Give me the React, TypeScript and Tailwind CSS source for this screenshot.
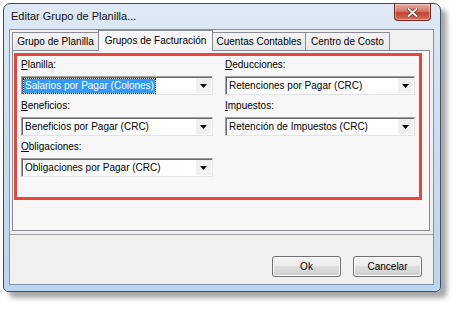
import React from 'react';

const Mn = ({ k, rest }: { k: string; rest: string }) => (
  <span>
    <span className="underline underline-offset-[1px]">{k}</span>
    {rest}
  </span>
);

const Combo = ({ value, selected }: { value: string; selected?: boolean }) => (
  <div className="flex h-[19px] border border-t-[#a0a0a0] border-l-[#a0a0a0] border-r-[#e3e3e3] border-b-[#e3e3e3] bg-white shadow-[inset_1px_1px_0_#696969]">
    <div className="flex flex-1 items-center pl-[2px] pt-[1px] overflow-hidden whitespace-nowrap">
      <span
        className={
          selected
            ? 'bg-[#3399ff] text-white px-[1px] leading-[14px] outline outline-1 outline-dotted outline-[#1a1a1a]'
            : 'px-[1px] leading-[14px] text-black'
        }
      >
        {value}
      </span>
    </div>
    <div className="flex w-[15px] items-center justify-center bg-[#f0f0f0] my-[1px] mr-[1px]">
      <svg width="7" height="4" viewBox="0 0 7 4">
        <path d="M0 0h7L3.5 4z" fill="#000" />
      </svg>
    </div>
  </div>
);

const Field = ({ k, rest, value, selected }: { k: string; rest: string; value: string; selected?: boolean }) => (
  <div className="flex flex-col">
    <div className="h-[13px] leading-[13px] mb-[5px] text-black">
      <Mn k={k} rest={rest} />
    </div>
    <Combo value={value} selected={selected} />
  </div>
);

const tabBase = 'flex items-center justify-center whitespace-nowrap border-[#898c95]';

export default function App() {
  return (
    <div className="w-[459px] h-[314px] bg-white pt-[3px] pl-[3px] font-['Liberation_Sans',Arial,sans-serif] text-[10px] text-black">
      <div className="flex flex-col w-[438px] h-[289px] rounded-t-[7px] rounded-b-[5px] border border-[#3f5068] bg-linear-to-b from-[#dfe9f5] via-[#cadcf0] to-[#bcd5ee] shadow-[6px_6px_5px_rgba(0,0,0,0.35)]">
        {/* title bar */}
        <div className="flex h-[25px] shrink-0 items-start">
          <div className="flex h-full flex-1 items-center pl-[7px] text-[11px] text-[#111]">
            Editar Grupo de Planilla...
          </div>
          <div className="mr-[9px] flex h-[17px] w-[37px] items-center justify-center rounded-b-[4px] border border-t-0 border-[#6e2a22] bg-[linear-gradient(#e9aa9f,#d7786b_45%,#c2402f_55%,#d6715f)] shadow-[inset_0_0_0_1px_rgba(255,255,255,0.35)]">
            <svg width="11" height="9" viewBox="0 0 11 9">
              <path d="M1.5 1l8 7M9.5 1l-8 7" stroke="#5a1a12" strokeWidth="3.2" strokeLinecap="round" />
              <path d="M1.5 1l8 7M9.5 1l-8 7" stroke="#fff" strokeWidth="2" strokeLinecap="round" />
            </svg>
          </div>
        </div>

        {/* client area */}
        <div className="ml-[5px] mr-[6px] flex h-[256px] flex-col border border-[#7f93aa] bg-[#f0f0f0]">
          <div className="ml-[2px] w-[418px]">
            {/* tabs */}
            <div className="flex h-[20px] items-end">
              <div className={`${tabBase} h-[18px] w-[86px] border border-r-0 border-b-0 bg-linear-to-b from-[#f3f3f3] to-[#e8e8e8]`}>
                Grupo de Planilla
              </div>
              <div className={`${tabBase} relative z-10 -mb-px h-[21px] w-[115px] border border-b-0 bg-[#f7f7f7] pb-[2px]`}>
                Grupos de Facturación
              </div>
              <div className={`${tabBase} h-[18px] w-[93px] border border-l-0 border-b-0 bg-linear-to-b from-[#f3f3f3] to-[#e8e8e8]`}>
                Cuentas Contables
              </div>
              <div className={`${tabBase} h-[18px] w-[84px] border border-l-0 border-b-0 bg-linear-to-b from-[#f3f3f3] to-[#e8e8e8]`}>
                Centro de Costo
              </div>
            </div>
            {/* panel */}
            <div className="h-[181px] border border-[#898c95] bg-[#f7f7f7]">
              <div className="ml-px mt-[2px] h-[147px] w-[408px] border-[3px] border-[#e8453c] pl-[4px] pt-[2px]">
                <div className="grid grid-cols-[192px_190px] gap-x-[12px] gap-y-[4px]">
                  <Field k="P" rest="lanilla:" value="Salarios por Pagar (Colones)" selected />
                  <Field k="D" rest="educciones:" value="Retenciones por Pagar (CRC)" />
                  <Field k="B" rest="eneficios:" value="Beneficios por Pagar (CRC)" />
                  <Field k="I" rest="mpuestos:" value="Retención de Impuestos (CRC)" />
                  <Field k="O" rest="bligaciones:" value="Obligaciones por Pagar (CRC)" />
                  <div />
                </div>
              </div>
            </div>
          </div>

          {/* separator */}
          <div className="mt-[3px] h-px bg-[#a0a0a0]" />

          {/* buttons */}
          <div className="mt-[21px] flex justify-end gap-[12px] pr-[11px]">
            {['Ok', 'Cancelar'].map((b) => (
              <button
                key={b}
                className="flex h-[21px] w-[69px] items-center justify-center rounded-[3px] border border-[#707070] bg-[linear-gradient(#f2f2f2,#ebebeb_50%,#dddddd_50%,#cfcfcf)] text-[10px] text-black shadow-[inset_0_0_0_1px_#fcfcfc]"
              >
                {b}
              </button>
            ))}
          </div>
        </div>
      </div>
    </div>
  );
}
